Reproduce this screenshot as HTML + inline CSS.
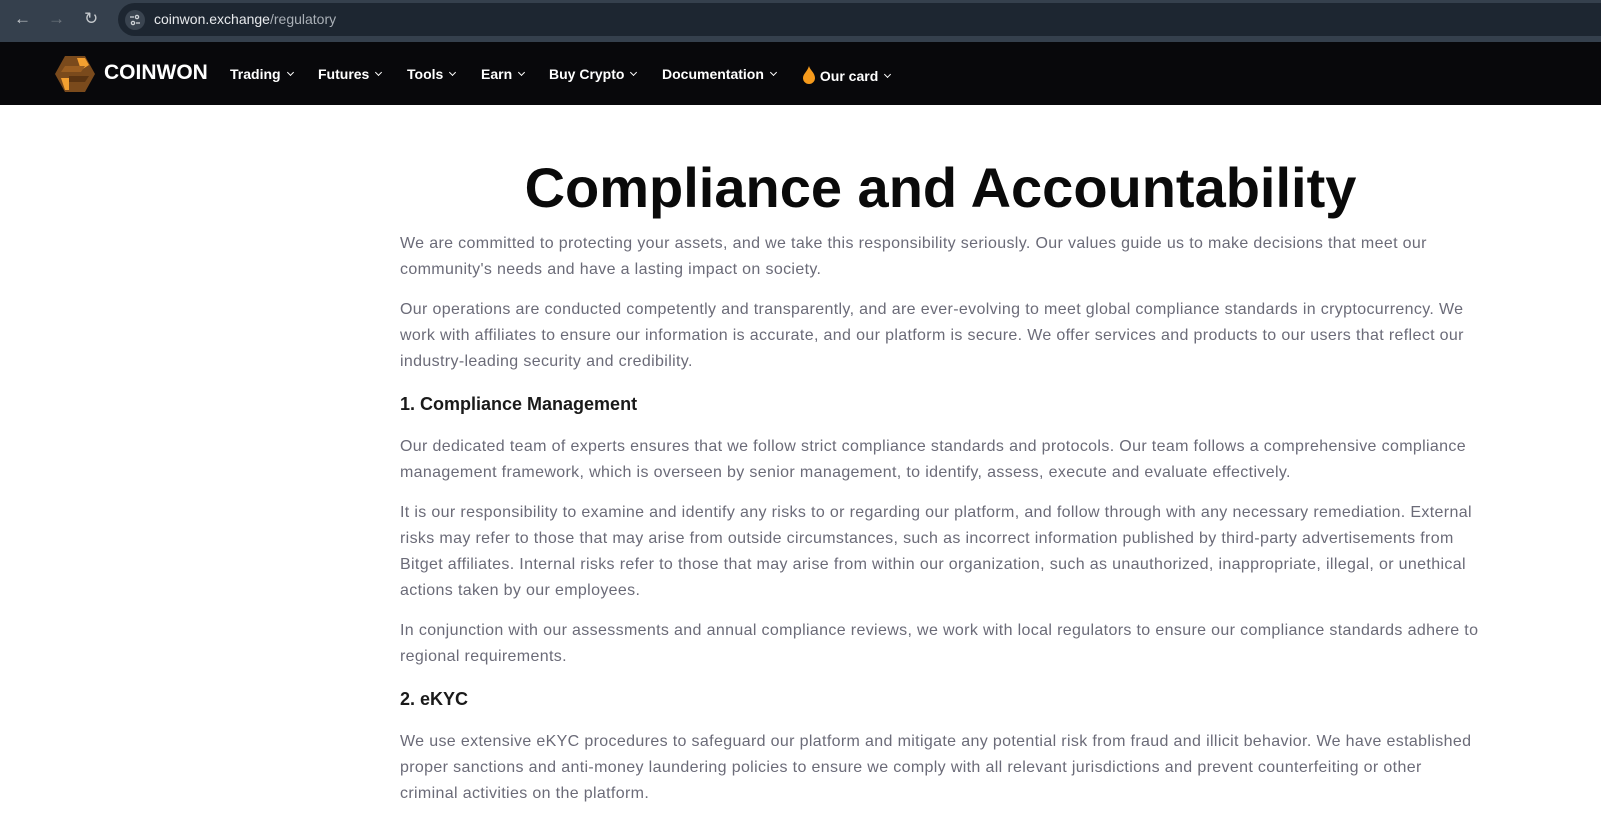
<!DOCTYPE html>
<html><head><meta charset="utf-8"><style>
*{margin:0;padding:0;box-sizing:border-box}
body{width:1601px;height:821px;overflow:hidden;background:#fff;font-family:"Liberation Sans",sans-serif}
.top{height:42px;background:#35404d;position:relative}
.addr{position:absolute;left:118px;top:3px;width:1483px;height:33px;background:#1d2631;border-radius:17px 0 0 17px}
.addr span{position:absolute;left:36px;top:8px;color:#e8eaed;font-size:14px}
.addr span i{font-style:normal;color:#aab0b7}
.ic{position:absolute;color:#c4c8cc;font-size:17px;top:9px}
.nav{height:63px;background:#08080b;position:relative;color:#fff}
.nav .brand{position:absolute;left:104px;top:19px;font-size:21px;font-weight:bold}
.nav .it{position:absolute;top:24px;font-size:14px;font-weight:bold}
.nav .it:after{content:"";display:inline-block;width:4px;height:4px;border-right:1.5px solid #fff;border-bottom:1.5px solid #fff;transform:rotate(45deg);margin-left:7px;position:relative;top:-4px}
.main{position:absolute;left:400px;top:105px;width:1081px;color:#6b6b78;font-size:16px;line-height:26px;letter-spacing:0.35px}
h1{text-align:center;color:#0a0a0a;font-size:56px;line-height:64px;margin:51px 0 0 0;letter-spacing:0}
p{margin-bottom:14px}
h3{color:#1a1a1a;font-size:18px;margin:16px 0 17px;line-height:26px;letter-spacing:0}
</style></head><body>
<div class="top">
<span class="ic" style="left:14px">&#8592;</span>
<span class="ic" style="left:48px;color:#70777f">&#8594;</span>
<span class="ic" style="left:84px">&#8635;</span>
<div class="addr"><svg style="position:absolute;left:7px;top:7px" width="20" height="20" viewBox="0 0 20 20"><circle cx="10" cy="10" r="10" fill="#3a4450"/><g stroke="#d0d4d8" stroke-width="1.3" fill="none"><line x1="5" y1="7" x2="9" y2="7"/><circle cx="12" cy="7" r="1.6"/><line x1="11" y1="13" x2="15" y2="13"/><circle cx="8" cy="13" r="1.6"/></g></svg><span>coinwon.exchange<i>/regulatory</i></span></div>
</div>
<div class="nav">
<svg style="position:absolute;left:55px;top:14px" width="40" height="36" viewBox="0 0 40 36"><polygon points="10,0 30,0 40,18 30,36 10,36 0,18" fill="#7a4a1c"/><polygon points="22,2 30,2 34,9 26,14" fill="#f4a030"/><polygon points="6,22 14,22 14,34 10,34" fill="#f4a030"/><polygon points="10,10 30,10 26,16 6,16" fill="#9a5e22"/><polygon points="14,20 34,20 30,26 14,26" fill="#5a3412"/></svg>
<div class="brand">COINWON</div>
<div class="it" style="left:230px">Trading</div>
<div class="it" style="left:318px">Futures</div>
<div class="it" style="left:407px">Tools</div>
<div class="it" style="left:481px">Earn</div>
<div class="it" style="left:549px">Buy Crypto</div>
<div class="it" style="left:662px">Documentation</div>
<div class="it" style="left:802px"><svg width="14" height="18" viewBox="0 0 14 18" style="vertical-align:-3px"><path d="M7 0C8 4 13 7 13 12a6 6 0 0 1-12 0C1 8 5 6 7 0z" fill="#f59a1c"/></svg> Our card</div>
</div>
<div class="main">
<h1>Compliance and Accountability</h1>
<p style="margin-top:11px">We are committed to protecting your assets, and we take this responsibility seriously. Our values guide us to make decisions that meet our community's needs and have a lasting impact on society.</p>
<p>Our operations are conducted competently and transparently, and are ever-evolving to meet global compliance standards in cryptocurrency. We work with affiliates to ensure our information is accurate, and our platform is secure. We offer services and products to our users that reflect our industry-leading security and credibility.</p>
<h3>1. Compliance Management</h3>
<p>Our dedicated team of experts ensures that we follow strict compliance standards and protocols. Our team follows a comprehensive compliance management framework, which is overseen by senior management, to identify, assess, execute and evaluate effectively.</p>
<p>It is our responsibility to examine and identify any risks to or regarding our platform, and follow through with any necessary remediation. External risks may refer to those that may arise from outside circumstances, such as incorrect information published by third-party advertisements from Bitget affiliates. Internal risks refer to those that may arise from within our organization, such as unauthorized, inappropriate, illegal, or unethical actions taken by our employees.</p>
<p>In conjunction with our assessments and annual compliance reviews, we work with local regulators to ensure our compliance standards adhere to regional requirements.</p>
<h3>2. eKYC</h3>
<p>We use extensive eKYC procedures to safeguard our platform and mitigate any potential risk from fraud and illicit behavior. We have established proper sanctions and anti-money laundering policies to ensure we comply with all relevant jurisdictions and prevent counterfeiting or other criminal activities on the platform.</p>
</div>
</body></html>
